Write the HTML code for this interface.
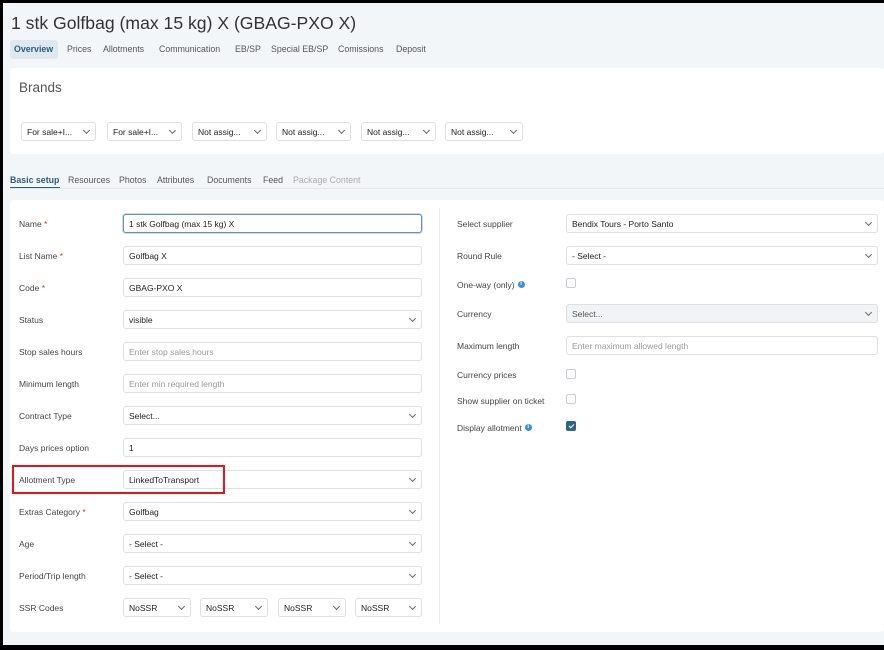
<!DOCTYPE html>
<html><head><meta charset="utf-8"><style>
*{box-sizing:border-box;margin:0;padding:0}
body{width:884px;height:650px;background:#000;font-family:"Liberation Sans",sans-serif;position:relative;overflow:hidden}
#pg{position:absolute;left:3px;top:3px;right:0;bottom:5px;background:#f3f6f9}
.a{position:absolute}
h1{position:absolute;left:8px;top:10px;font-size:17.6px;font-weight:normal;color:#333}
.tab{position:absolute;top:41px;font-size:8.8px;color:#555}
.card{position:absolute;background:#fff;border-radius:3px}
.lbl{position:absolute;font-size:8.5px;color:#444}
.in{position:absolute;height:19px;border:1px solid #dcdfe3;border-radius:3px;background:#fff;font-size:8.5px;color:#222;padding:4px 5px;white-space:nowrap}
.ph{color:#999}
.sel::after{content:"";position:absolute;right:6px;top:5px;width:4px;height:4px;border-right:1.2px solid #666;border-bottom:1.2px solid #666;transform:rotate(45deg)}
.req{color:#d33}
.cb{position:absolute;width:10px;height:10px;border:1px solid #c9cdd2;border-radius:2px;background:#fff}
.info{display:inline-block;width:7px;height:7px;border-radius:50%;background:#3b8ede;color:#fff;font-size:6px;text-align:center;line-height:7px;vertical-align:3px;margin-left:3px;font-weight:bold}
</style></head><body><div id="pg">
<h1>1 stk Golfbag (max 15 kg) X (GBAG-PXO X)</h1>
<div class="a" style="left:7px;top:37px;width:48px;height:19px;background:#dfe8ef;border-radius:3px"></div>
<div class="tab" style="left:11px;color:#2c5d7e;font-weight:bold">Overview</div>
<div class="tab" style="left:64px">Prices</div>
<div class="tab" style="left:100px">Allotments</div>
<div class="tab" style="left:156px">Communication</div>
<div class="tab" style="left:232px">EB/SP</div>
<div class="tab" style="left:268px">Special EB/SP</div>
<div class="tab" style="left:335px">Comissions</div>
<div class="tab" style="left:393px">Deposit</div>

<div class="card" style="left:7px;top:65px;right:0;height:86px"></div>
<div class="a" style="left:16px;top:77px;font-size:13.5px;color:#555">Brands</div>
<div class="in sel" style="left:18px;top:119px;width:75px;height:19px">For sale+I...</div>
<div class="in sel" style="left:104px;top:119px;width:75px">For sale+I...</div>
<div class="in sel" style="left:189px;top:119px;width:75px">Not assig...</div>
<div class="in sel" style="left:273px;top:119px;width:75px">Not assig...</div>
<div class="in sel" style="left:358px;top:119px;width:75px">Not assig...</div>
<div class="in sel" style="left:442px;top:119px;width:78px">Not assig...</div>

<div class="tab" style="left:7px;top:172px;color:#2c5d7e;font-weight:bold">Basic setup</div>
<div class="a" style="left:7px;top:184px;width:50px;height:2px;background:#2c5d7e"></div>
<div class="tab" style="left:65px;top:172px">Resources</div>
<div class="tab" style="left:116px;top:172px">Photos</div>
<div class="tab" style="left:154px;top:172px">Attributes</div>
<div class="tab" style="left:204px;top:172px">Documents</div>
<div class="tab" style="left:260px;top:172px">Feed</div>
<div class="tab" style="left:290px;top:172px;color:#aaa">Package Content</div>
<div class="a" style="left:7px;top:185px;right:0;height:1px;background:#e3e6ea"></div>

<div class="card" style="left:7px;top:197px;right:0;height:432px"></div>
<div class="a" style="left:436px;top:205px;width:1px;height:416px;background:#e8eaed"></div>

<div class="lbl" style="left:16px;top:216px">Name <span class="req">*</span></div>
<div class="in" style="left:120px;top:211px;width:299px;border-color:#6f8ea6;box-shadow:0 0 0 1px #cfdce6">1 stk Golfbag (max 15 kg) X</div>
<div class="lbl" style="left:16px;top:248px">List Name <span class="req">*</span></div>
<div class="in" style="left:120px;top:243px;width:299px">Golfbag X</div>
<div class="lbl" style="left:16px;top:280px">Code <span class="req">*</span></div>
<div class="in" style="left:120px;top:275px;width:299px">GBAG-PXO X</div>
<div class="lbl" style="left:16px;top:312px">Status</div>
<div class="in sel" style="left:120px;top:307px;width:299px">visible</div>
<div class="lbl" style="left:16px;top:344px">Stop sales hours</div>
<div class="in ph" style="left:120px;top:339px;width:299px">Enter stop sales hours</div>
<div class="lbl" style="left:16px;top:376px">Minimum length</div>
<div class="in ph" style="left:120px;top:371px;width:299px">Enter min required length</div>
<div class="lbl" style="left:16px;top:408px">Contract Type</div>
<div class="in sel" style="left:120px;top:403px;width:299px">Select...</div>
<div class="lbl" style="left:16px;top:440px">Days prices option</div>
<div class="in" style="left:120px;top:435px;width:299px">1</div>
<div class="lbl" style="left:16px;top:472px">Allotment Type</div>
<div class="in sel" style="left:120px;top:467px;width:299px">LinkedToTransport</div>
<div class="a" style="left:9px;top:462px;width:213px;height:29px;border:2px solid #e8141c"></div>
<div class="lbl" style="left:16px;top:504px">Extras Category <span class="req">*</span></div>
<div class="in sel" style="left:120px;top:499px;width:299px">Golfbag</div>
<div class="lbl" style="left:16px;top:536px">Age</div>
<div class="in sel" style="left:120px;top:531px;width:299px">- Select -</div>
<div class="lbl" style="left:16px;top:568px">Period/Trip length</div>
<div class="in sel" style="left:120px;top:563px;width:299px">- Select -</div>
<div class="lbl" style="left:16px;top:600px">SSR Codes</div>
<div class="in sel" style="left:120px;top:595px;width:68px">NoSSR</div>
<div class="in sel" style="left:197px;top:595px;width:68px">NoSSR</div>
<div class="in sel" style="left:275px;top:595px;width:68px">NoSSR</div>
<div class="in sel" style="left:352px;top:595px;width:67px">NoSSR</div>

<div class="lbl" style="left:454px;top:216px">Select supplier</div>
<div class="in sel" style="left:563px;top:211px;width:312px">Bendix Tours - Porto Santo</div>
<div class="lbl" style="left:454px;top:248px">Round Rule</div>
<div class="in sel" style="left:563px;top:243px;width:312px">- Select -</div>
<div class="lbl" style="left:454px;top:277px">One-way (only)<span class="info">i</span></div>
<div class="cb" style="left:563px;top:275px"></div>
<div class="lbl" style="left:454px;top:306px">Currency</div>
<div class="in sel" style="left:563px;top:301px;width:312px;background:#f1f3f5;color:#555">Select...</div>
<div class="lbl" style="left:454px;top:338px">Maximum length</div>
<div class="in ph" style="left:563px;top:333px;width:312px">Enter maximum allowed length</div>
<div class="lbl" style="left:454px;top:367px">Currency prices</div>
<div class="cb" style="left:563px;top:366px"></div>
<div class="lbl" style="left:454px;top:393px">Show supplier on ticket</div>
<div class="cb" style="left:563px;top:391px"></div>
<div class="lbl" style="left:454px;top:420px">Display allotment<span class="info">i</span></div>
<div class="cb" style="left:563px;top:418px;background:#2e6585;border-color:#2e6585"><div style="position:absolute;left:3px;top:1px;width:3px;height:5px;border-right:1.2px solid #fff;border-bottom:1.2px solid #fff;transform:rotate(45deg)"></div></div>
</div></body></html>
